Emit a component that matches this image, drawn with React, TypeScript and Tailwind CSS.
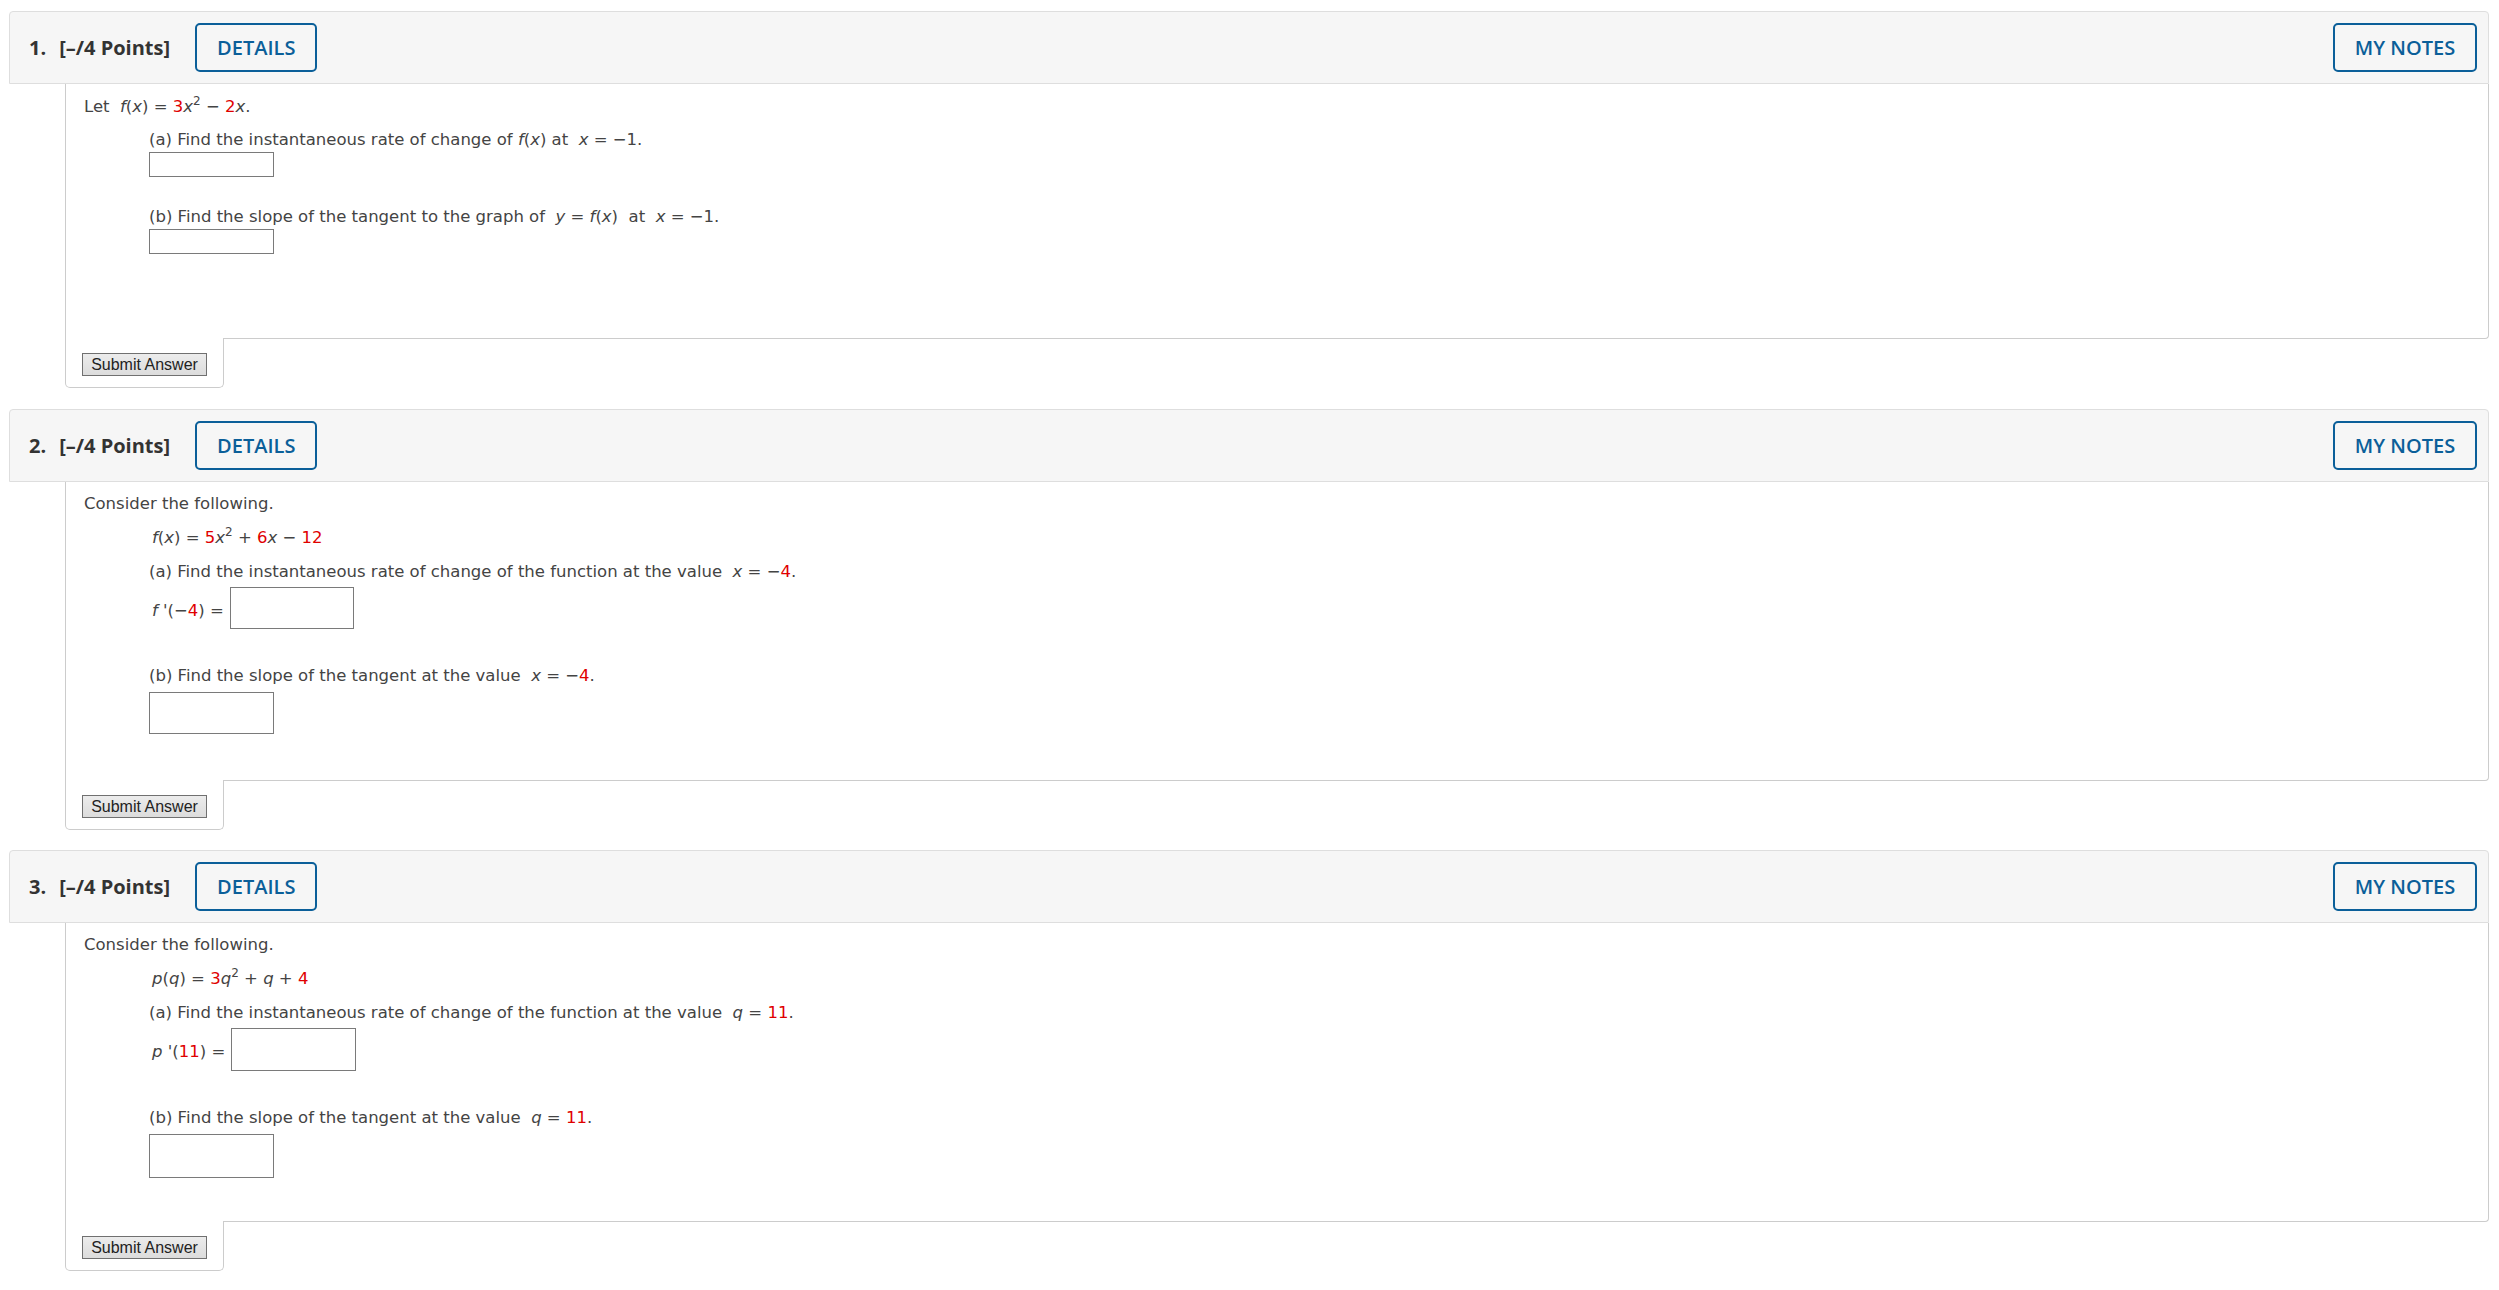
import React from "react";

// small helpers for the math bits
function M({ children }: { children: React.ReactNode }) {
  return <i className="italic">{children}</i>;
}

function R({ children }: { children: React.ReactNode }) {
  return <span className="text-[#e00000]">{children}</span>;
}

function Sup({ children }: { children: React.ReactNode }) {
  return <sup className="text-[12px] -top-[7px]">{children}</sup>;
}

function AnswerBox({ className }: { className: string }) {
  return (
    <input
      type="text"
      readOnly
      className={"block bg-white border border-[#7a7a7a] outline-none " + className}
    />
  );
}

function Header({ num }: { num: number }) {
  return (
    <div className="flex items-center justify-between h-[73px] bg-[#f6f6f6] border border-[#dedede] rounded-t-[4px] pl-[19px] pr-[11px] font-['Open_Sans',sans-serif]">
      <div className="flex items-center">
        <span className="text-[20px] font-bold text-[#333333]">{num}.</span>
        <span className="ml-[13px] text-[20px] font-bold text-[#333333]">[–/4 Points]</span>
        <button className="ml-[25px] h-[49px] px-[20px] border-2 border-[#0b5f99] rounded-[5px] text-[20px] font-semibold text-[#0b5f99]">
          DETAILS
        </button>
      </div>
      <button className="h-[49px] w-[144px] border-2 border-[#0b5f99] rounded-[5px] text-[20px] font-semibold text-[#0b5f99]">
        MY NOTES
      </button>
    </div>
  );
}

function SubmitTab() {
  return (
    <div className="relative ml-[56px] -mt-px w-[159px] bg-white border border-t-0 border-[#cccccc] rounded-b-[5px] pt-[15px] pb-[11px] pl-[16px]">
      <button className="block h-[23px] w-[125px] border border-[#707070] bg-gradient-to-b from-[#ececec] to-[#dcdcdc] text-[16px] leading-[21px] text-[#222222] font-['Liberation_Sans',Arial,sans-serif]">
        Submit Answer
      </button>
    </div>
  );
}

function Question({
  num,
  bodyClass,
  children,
}: {
  num: number;
  bodyClass: string;
  children: React.ReactNode;
}) {
  return (
    <div>
      <Header num={num} />
      <div
        className={
          "ml-[56px] border-l border-r border-b border-[#cccccc] rounded-br-[4px] pl-[18px] text-[16.5px] leading-[20px] text-[#444444] font-['DejaVu_Sans',Verdana,sans-serif] " +
          bodyClass
        }
      >
        {children}
      </div>
      <SubmitTab />
    </div>
  );
}

export default function App() {
  return (
    <div className="min-h-screen bg-white pt-[11px] pl-[9px] pr-[10px] pb-[20px]">
      {/* Question 1 */}
      <Question num={1} bodyClass="pt-[13px] pb-[84px]">
        <p>
          Let&nbsp; <M>f</M>(<M>x</M>) = <R>3</R>
          <M>x</M>
          <Sup>2</Sup> − <R>2</R>
          <M>x</M>.
        </p>
        <div className="pl-[65px]">
          <p className="mt-[13px]">
            (a) Find the instantaneous rate of change of <M>f</M>(<M>x</M>) at&nbsp; <M>x</M> = −1.
          </p>
          <AnswerBox className="mt-[2px] w-[125px] h-[25px]" />
          <p className="mt-[30px]">
            (b) Find the slope of the tangent to the graph of&nbsp; <M>y</M> = <M>f</M>(<M>x</M>)&nbsp; at&nbsp;{" "}
            <M>x</M> = −1.
          </p>
          <AnswerBox className="mt-[2px] w-[125px] h-[25px]" />
        </div>
      </Question>

      {/* Question 2 */}
      <div className="mt-[21px]">
        <Question num={2} bodyClass="pt-[12px] pb-[46px]">
          <p>Consider the following.</p>
          <div className="pl-[65px]">
            <p className="mt-[14px] pl-[3px]">
              <M>f</M>(<M>x</M>) = <R>5</R>
              <M>x</M>
              <Sup>2</Sup> + <R>6</R>
              <M>x</M> − <R>12</R>
            </p>
            <p className="mt-[14px]">
              (a) Find the instantaneous rate of change of the function at the value&nbsp; <M>x</M> = −<R>4</R>.
            </p>
            <div className="mt-[5px] flex items-center">
              <span className="pl-[3px] pt-[5px]">
                <M>f</M> '(−<R>4</R>) =
              </span>
              <AnswerBox className="ml-[6px] w-[124px] h-[42px]" />
            </div>
            <p className="mt-[37px]">
              (b) Find the slope of the tangent at the value&nbsp; <M>x</M> = −<R>4</R>.
            </p>
            <AnswerBox className="mt-[6px] w-[125px] h-[42px]" />
          </div>
        </Question>
      </div>

      {/* Question 3 */}
      <div className="mt-[20px]">
        <Question num={3} bodyClass="pt-[12px] pb-[43px]">
          <p>Consider the following.</p>
          <div className="pl-[65px]">
            <p className="mt-[14px] pl-[3px]">
              <M>p</M>(<M>q</M>) = <R>3</R>
              <M>q</M>
              <Sup>2</Sup> + <M>q</M> + <R>4</R>
            </p>
            <p className="mt-[14px]">
              (a) Find the instantaneous rate of change of the function at the value&nbsp; <M>q</M> = <R>11</R>.
            </p>
            <div className="mt-[5px] flex items-center">
              <span className="pl-[3px] pt-[5px]">
                <M>p</M> '(<R>11</R>) =
              </span>
              <AnswerBox className="ml-[6px] w-[125px] h-[43px]" />
            </div>
            <p className="mt-[37px]">
              (b) Find the slope of the tangent at the value&nbsp; <M>q</M> = <R>11</R>.
            </p>
            <AnswerBox className="mt-[6px] w-[125px] h-[44px]" />
          </div>
        </Question>
      </div>
    </div>
  );
}
